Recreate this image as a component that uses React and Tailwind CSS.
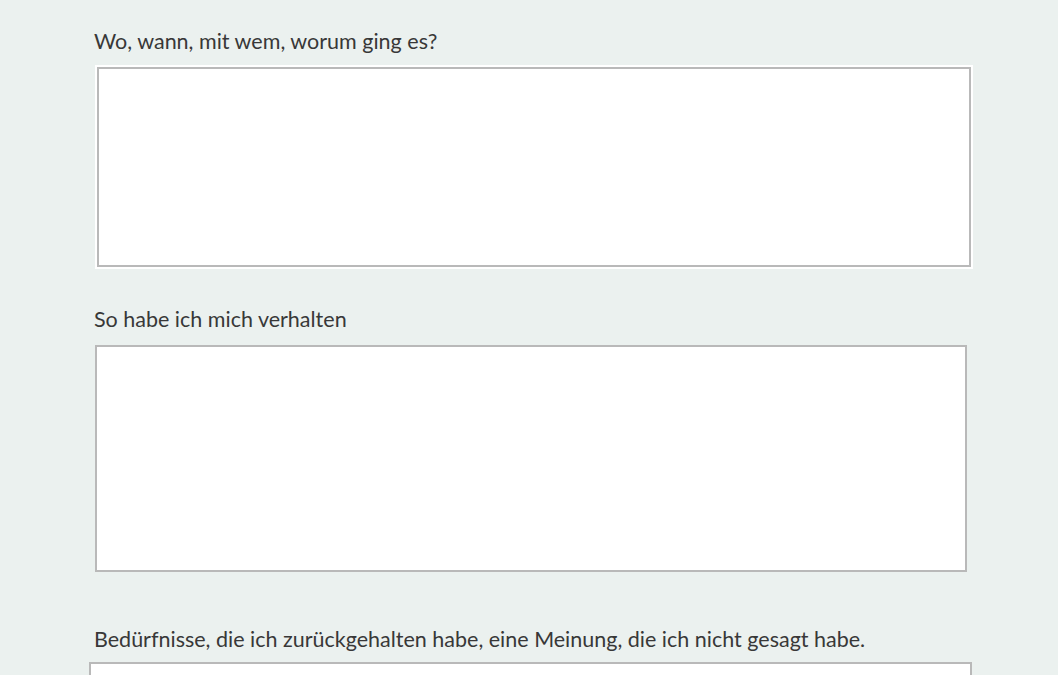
export default function App() {
  return (
    <div className="w-[1058px] h-[675px] overflow-hidden bg-[#ebf1ef] text-[#383838]" style={{ fontFamily: 'Lato, "Open Sans", sans-serif' }}>
      <div className="flex flex-col pt-[27px]">
        <label className="ml-[94px] text-[21.5px] leading-[28px]">Wo, wann, mit wem, worum ging es?</label>
        <div className="ml-[95px] mt-[10px] w-[878px] p-[2px] bg-white">
          <div className="h-[200px] border-2 border-[#b9b9b9] bg-white"></div>
        </div>
        <label className="ml-[94px] mt-[36px] text-[21.5px] leading-[28px]">So habe ich mich verhalten</label>
        <div className="ml-[95px] mt-[12px] w-[872px] h-[227px] border-2 border-[#b9b9b9] bg-white"></div>
        <label className="ml-[94px] mt-[53px] text-[21.5px] leading-[28px]">Bedürfnisse, die ich zurückgehalten habe, eine Meinung, die ich nicht gesagt habe.</label>
        <div className="ml-[89px] mt-[9px] w-[883px] h-[200px] border-2 border-[#b9b9b9] bg-white"></div>
      </div>
    </div>
  );
}
